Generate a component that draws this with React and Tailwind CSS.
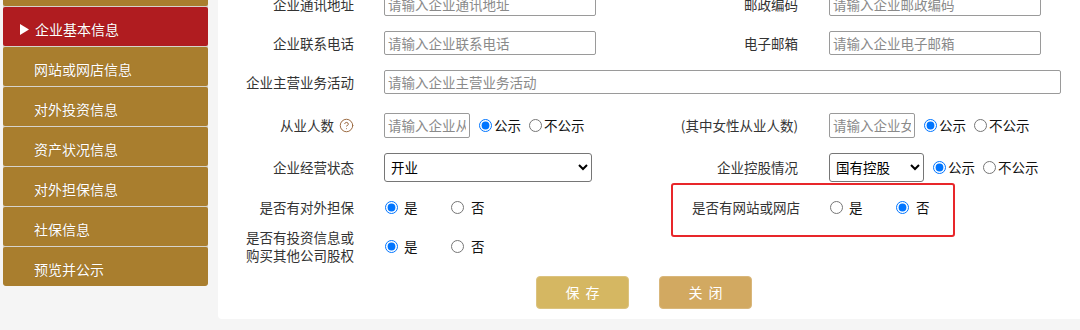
import React from "react";
import { CircleHelp } from "lucide-react";

const font = { fontFamily: '"Noto Sans CJK SC", "Noto Sans", sans-serif' };

const menu = [
  { t: "基本信息", active: false },
  { t: "企业基本信息", active: true },
  { t: "网站或网店信息" },
  { t: "对外投资信息" },
  { t: "资产状况信息" },
  { t: "对外担保信息" },
  { t: "社保信息" },
  { t: "预览并公示" },
];

function Radio({ checked, name }) {
  return (
    <input
      type="radio"
      name={name}
      defaultChecked={checked}
      className="m-0 w-[13px] h-[13px] shrink-0 accent-[#0075ff]"
    />
  );
}

function PublicRadios({ name }) {
  return (
    <div className="flex items-center ml-[9px] text-[13.5px] text-[#111]">
      <Radio name={name} checked />
      <span className="ml-[2px] mr-[8px]">公示</span>
      <Radio name={name} />
      <span className="ml-[2px]">不公示</span>
    </div>
  );
}

function YesNo({ name, yes }) {
  return (
    <div className="flex items-center text-[13.5px] text-[#111] ml-[1px]">
      <label className="flex items-center w-[66px]">
        <Radio name={name} checked={yes} />
        <span className="ml-[6px]">是</span>
      </label>
      <label className="flex items-center w-[66px]">
        <Radio name={name} checked={!yes} />
        <span className="ml-[7px]">否</span>
      </label>
    </div>
  );
}

function TextInput({ w, ph, h = "h-[24px]" }) {
  return (
    <input
      placeholder={ph}
      className={`${w} ${h} border border-[#9a9a9a] rounded-[2px] px-[3px] text-[13.5px] text-[#111] placeholder:text-[#8a8a8a] outline-none bg-white`}
    />
  );
}

function Label({ children, pr = "pr-[30px]" }) {
  return (
    <div className={`text-right ${pr} text-[13.5px] text-[#333] leading-[18px]`}>{children}</div>
  );
}

export default function App() {
  return (
    <div className="w-[1080px] h-[330px] bg-[#f5f5f5] flex overflow-hidden" style={font}>
      {/* Sidebar */}
      <div className="ml-[3px] w-[205px] shrink-0 self-start -mt-[33px] flex flex-col gap-px bg-[#d6d3cc] rounded-b-[3px] overflow-hidden">
        {menu.map((m, i) => (
          <div
            key={i}
            className={`h-[39px] flex items-center pt-[5px] text-[14px] text-white rounded-[2px] ${
              m.active ? "bg-[#b01c20] pl-[17px]" : "bg-[#a97e2e] pl-[31px]"
            }`}
          >
            {m.active && (
              <svg width="9" height="11" viewBox="0 0 9 11" className="mr-[6px]">
                <polygon points="0,0 9,5.5 0,11" fill="#fff" />
              </svg>
            )}
            <span className="[text-shadow:0_0_1px_rgba(60,30,0,0.35)]">{m.t}</span>
          </div>
        ))}
      </div>

      {/* Panel */}
      <div className="ml-[10px] flex-1 h-[319px] bg-white rounded-bl-[4px] overflow-hidden">
        <div className="-mt-[16px] grid grid-cols-[166px_287px_158px_1fr]">
          {/* Row 1 */}
          <div className="h-[40px] flex items-center justify-end"><Label>企业通讯地址</Label></div>
          <div className="h-[40px] flex items-center"><TextInput w="w-[212px]" ph="请输入企业通讯地址" /></div>
          <div className="h-[40px] flex items-center justify-end"><Label pr="pr-[31px]">邮政编码</Label></div>
          <div className="h-[40px] flex items-center"><TextInput w="w-[212px]" ph="请输入企业邮政编码" /></div>

          {/* Row 2 */}
          <div className="h-[38px] flex items-center justify-end"><Label>企业联系电话</Label></div>
          <div className="h-[38px] flex items-center"><TextInput w="w-[212px]" ph="请输入企业联系电话" /></div>
          <div className="h-[38px] flex items-center justify-end"><Label pr="pr-[31px]">电子邮箱</Label></div>
          <div className="h-[38px] flex items-center"><TextInput w="w-[212px]" ph="请输入企业电子邮箱" /></div>

          {/* Row 3 */}
          <div className="h-[40px] flex items-center justify-end"><Label>企业主营业务活动</Label></div>
          <div className="h-[40px] flex items-center col-span-3"><TextInput w="w-[677px]" ph="请输入企业主营业务活动" /></div>

          {/* Row 4 */}
          <div className="h-[46px] flex items-center justify-end pr-[30px]">
            <span className="text-[13.5px] text-[#333]">从业人数</span>
            <CircleHelp size={15} strokeWidth={1.6} color="#9c6b42" className="ml-[5px]" />
          </div>
          <div className="h-[46px] flex items-center">
            <TextInput w="w-[86px]" h="h-[25px]" ph="请输入企业从业人数" />
            <PublicRadios name="r4a" />
          </div>
          <div className="h-[46px] flex items-center justify-end"><Label pr="pr-[31px]">(其中女性从业人数)</Label></div>
          <div className="h-[46px] flex items-center">
            <TextInput w="w-[86px]" h="h-[25px]" ph="请输入企业女性从业人数" />
            <PublicRadios name="r4b" />
          </div>

          {/* Row 5 */}
          <div className="h-[38px] flex items-center justify-end"><Label>企业经营状态</Label></div>
          <div className="h-[38px] flex items-center">
            <select className="w-[208px] h-[29px] border border-[#767676] rounded-[3px] text-[13.5px] text-black pl-[2px] bg-white">
              <option>开业</option>
            </select>
          </div>
          <div className="h-[38px] flex items-center justify-end"><Label pr="pr-[31px]">企业控股情况</Label></div>
          <div className="h-[38px] flex items-center">
            <select className="w-[95px] h-[29px] border border-[#767676] rounded-[3px] text-[13.5px] text-black pl-[2px] bg-white">
              <option>国有控股</option>
            </select>
            <PublicRadios name="r5b" />
          </div>

          {/* Row 6 */}
          <div className="h-[42px] flex items-center justify-end"><Label>是否有对外担保</Label></div>
          <div className="h-[42px] flex items-center"><YesNo name="r6a" yes /></div>
          <div className="h-[42px] flex items-center justify-end relative">
            <Label pr="pr-[29px]">是否有网站或网店</Label>
            <div className="absolute left-0 top-[-3px] w-[284px] h-[54px] border-2 border-[#e8262a] rounded-[3px] pointer-events-none" />
          </div>
          <div className="h-[42px] flex items-center"><YesNo name="r6b" yes={false} /></div>

          {/* Row 7 */}
          <div className="h-[36px] flex items-center justify-end">
            <Label>是否有投资信息或<br />购买其他公司股权</Label>
          </div>
          <div className="h-[36px] flex items-center"><YesNo name="r7a" yes /></div>
          <div className="h-[36px]" />
          <div className="h-[36px]" />
        </div>

        {/* Buttons */}
        <div className="flex ml-[318px] mt-[12px] gap-[30px]">
          <button className="w-[93px] h-[33px] rounded-[4px] bg-[#d5b762] border border-[#dcc37f] text-white text-[14px] tracking-[6px] pl-[6px]">保存</button>
          <button className="w-[93px] h-[33px] rounded-[4px] bg-[#d2a961] border border-[#d9b77b] text-white text-[14px] tracking-[6px] pl-[6px]">关闭</button>
        </div>
      </div>
    </div>
  );
}
